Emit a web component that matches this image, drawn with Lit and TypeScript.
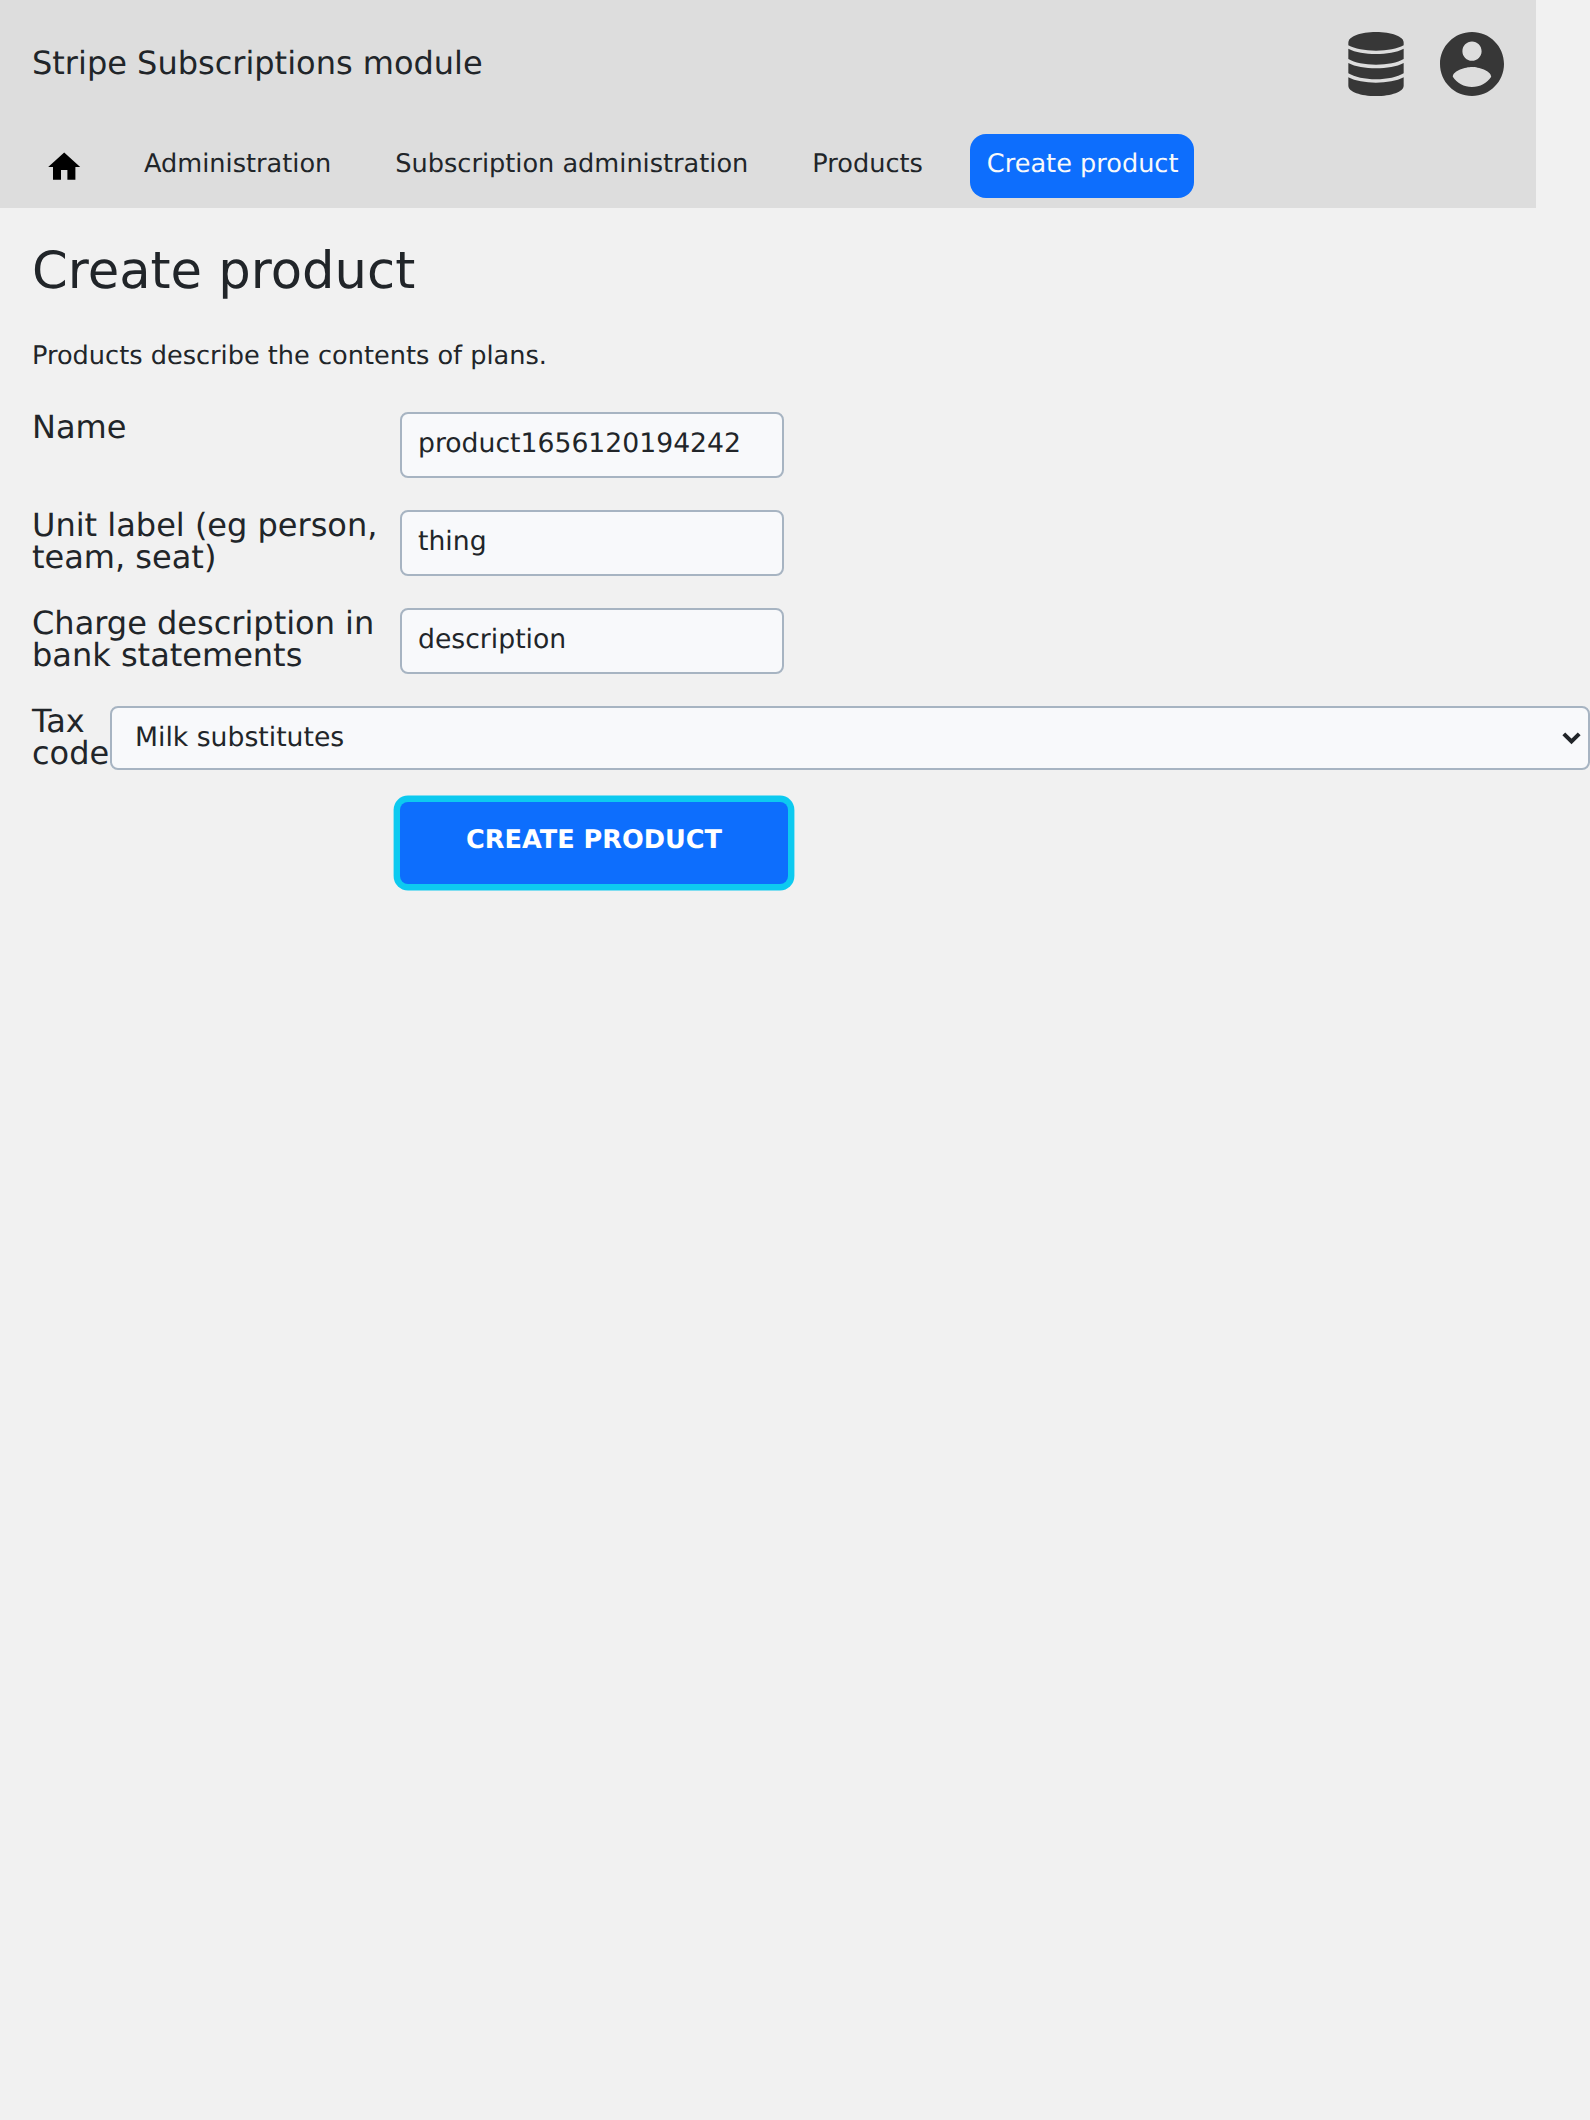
import { LitElement, html, css, svg } from "lit";
import { customElement } from "lit/decorators.js";

const databaseIcon = html`<svg class="icon database" viewBox="0 0 168 192" aria-hidden="true">
  ${svg`<path d="M1 32C1 13 38 0 84 0S167 13 167 32V40C148 50 118 56 84 56S20 50 1 40Z"/>
  <path d="M1 50C22 61 52 66 84 66S146 61 167 50V81C148 92 118 98 84 98S20 92 1 81Z"/>
  <path d="M1 93C22 104 52 109 84 109S146 104 167 93V124C148 135 118 142 84 142S20 135 1 124Z"/>
  <path d="M1 136C22 147 52 152 84 152S146 147 167 136V161C167 179 130 192 84 192S1 179 1 161Z"/>`}
</svg>`;

const accountIcon = html`<svg class="icon account" viewBox="2 2 20 20" aria-hidden="true">
  <path d="M12 2C6.48 2 2 6.48 2 12s4.48 10 10 10 10-4.48 10-10S17.52 2 12 2zm0 3c1.66 0 3 1.34 3 3s-1.34 3-3 3-3-1.34-3-3 1.34-3 3-3zm0 14.2c-2.5 0-4.71-1.28-6-3.22.03-1.99 4-3.08 6-3.08 1.99 0 5.97 1.09 6 3.08-1.29 1.94-3.5 3.22-6 3.22z"/>
</svg>`;

const homeIcon = html`<svg class="home" viewBox="0 0.2 24 24" aria-hidden="true">
  <path d="M10 20v-6h4v6h5v-8h3L12 3 2 12h3v8z"/>
</svg>`;

const fields = [
  { label: "Name", value: "product1656120194242" },
  { label: "Unit label (eg person, team, seat)", value: "thing" },
  { label: "Charge description in bank statements", value: "description" },
];

@customElement("app-root")
export class AppRoot extends LitElement {
  static styles = css`
    :host {
      display: block;
      box-sizing: border-box;
      min-height: 2120px;
      background: #f1f1f1;
      color: #212529;
      font-family: "DejaVu Sans", sans-serif;
      font-size: 25.6px;
      text-rendering: geometricPrecision;
      overflow: hidden;
    }
    *,
    *::before,
    *::after {
      box-sizing: border-box;
    }
    .header {
      width: 1536px;
      height: 208px;
      background: #ddd;
    }
    .bar {
      display: flex;
      justify-content: space-between;
      height: 134px;
      padding: 32px 32px 0;
    }
    .title {
      font-size: 32px;
      line-height: 64px;
      margin-top: -1px;
    }
    .tools {
      display: flex;
      gap: 36px;
    }
    .icon {
      height: 64px;
      fill: #373737;
    }
    .database {
      width: 56px;
    }
    .account {
      width: 64px;
    }
    .nav {
      display: flex;
      gap: 32px;
      padding-left: 32px;
    }
    .link {
      height: 64px;
      padding: 0 16px;
      border-radius: 16px;
      line-height: 60px;
      color: inherit;
      text-decoration: none;
      white-space: nowrap;
    }
    .link.current {
      margin-left: -0.8px;
      padding-left: 16.8px;
      background: #0d6efd;
      color: #f8f9fa;
    }
    .link.root {
      padding: 14px 12.8px 0;
    }
    .home {
      display: block;
      width: 38.4px;
      height: 38.4px;
      fill: #000;
    }
    .content {
      padding-left: 32px;
    }
    .heading {
      margin: 0;
      padding-top: 33px;
      font-size: 51.2px;
      font-weight: 400;
      line-height: 60px;
    }
    .intro {
      margin: 39px 0 0;
      line-height: 32px;
    }
    .form {
      display: flex;
      flex-direction: column;
      gap: 32px;
      padding-top: 40px;
    }
    .row {
      display: grid;
      grid-template-columns: 368px 384px;
    }
    .row.wide {
      grid-template-columns: 78px 1480px;
    }
    .label {
      font-size: 32px;
      line-height: 32px;
      margin-top: -1px;
    }
    .input,
    .select,
    .submit {
      text-rendering: inherit;
    }
    .input,
    .select {
      width: 100%;
      margin: 0;
      border: 2px solid #a7b4c2;
      border-radius: 8px;
      background: #f8f9fb;
      color: #212529;
      font-family: inherit;
      font-size: 26.6667px;
      outline: none;
    }
    .input {
      height: 66px;
      padding: 0 16px 3px;
    }
    .picker {
      display: grid;
      align-items: center;
    }
    .select {
      grid-area: 1 / 1;
      height: 64px;
      padding: 0 23px 1px;
      appearance: none;
    }
    .chevron {
      grid-area: 1 / 1;
      justify-self: end;
      width: 19px;
      height: 13px;
      margin-right: 9px;
      fill: none;
      stroke: #212529;
      stroke-width: 4;
      pointer-events: none;
    }
    .submit {
      width: 388px;
      height: 82px;
      margin-left: 368px;
      padding: 0 0 7px;
      border: 0;
      border-radius: 8px;
      background: #0d6efd;
      box-shadow: 0 0 0 6.4px #0dcaf0;
      color: #fff;
      font-family: inherit;
      font-size: 25.6px;
      font-weight: 700;
      text-transform: uppercase;
    }
  `;

  render() {
    return html`
      <header class="header">
        <div class="bar">
          <div class="title">Stripe Subscriptions module</div>
          <div class="tools">${databaseIcon}${accountIcon}</div>
        </div>
        <nav class="nav">
          <a class="link root" aria-label="Home">${homeIcon}</a>
          <a class="link">Administration</a>
          <a class="link">Subscription administration</a>
          <a class="link">Products</a>
          <a class="link current">Create product</a>
        </nav>
      </header>
      <main class="content">
        <h1 class="heading">Create product</h1>
        <p class="intro">Products describe the contents of plans.</p>
        <form class="form">
          ${fields.map(
            (field) => html`<label class="row">
              <span class="label">${field.label}</span>
              <input class="input" type="text" .value=${field.value} />
            </label>`
          )}
          <label class="row wide">
            <span class="label">Tax code</span>
            <span class="picker">
              <select class="select">
                <option>Milk substitutes</option>
              </select>
              <svg class="chevron" viewBox="0 0 19 13" aria-hidden="true">
                <path d="M1.8 1.8 9.5 9.5 17.2 1.8" />
              </svg>
            </span>
          </label>
          <button class="submit" type="button">Create product</button>
        </form>
      </main>
    `;
  }
}
